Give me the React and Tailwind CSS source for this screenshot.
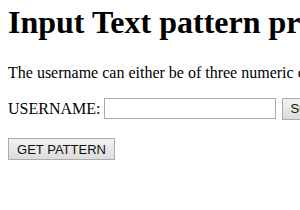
export default function App() {
  return (
    <div className="w-[300px] h-[210px] overflow-hidden bg-white text-black" style={{ fontFamily: '"Liberation Serif", "Times New Roman", serif' }}>
      <div className="pl-2 whitespace-nowrap">
        <h1 className="pt-[4px] text-[32px] font-bold leading-[36.8px]">Input Text pattern property</h1>
        <p className="mt-[23px] text-[16px] leading-[18.4px]">The username can either be of three numeric characters or six lowercase letters.</p>
        <div className="mt-[16px] flex items-center h-[21px] text-[16px] leading-[18.4px]">
          <span>USERNAME:</span>
          <input type="text" className="ml-[4px] w-[172px] h-[21px] border border-[#a9a9a9] bg-white outline-none" />
          <button className="ml-[6px] h-[22px] px-[7px] border border-[#acacac] bg-gradient-to-b from-[#f2f2f2] to-[#dcdcdc] text-[13px] leading-none text-[#111]" style={{ fontFamily: '"Liberation Sans", Arial, sans-serif' }}>Submit</button>
        </div>
        <button className="mt-[19px] h-[22px] w-[107px] border border-[#acacac] bg-gradient-to-b from-[#f2f2f2] to-[#dcdcdc] text-[13px] leading-none text-[#111]" style={{ fontFamily: '"Liberation Sans", Arial, sans-serif' }}>GET PATTERN</button>
      </div>
    </div>
  );
}
